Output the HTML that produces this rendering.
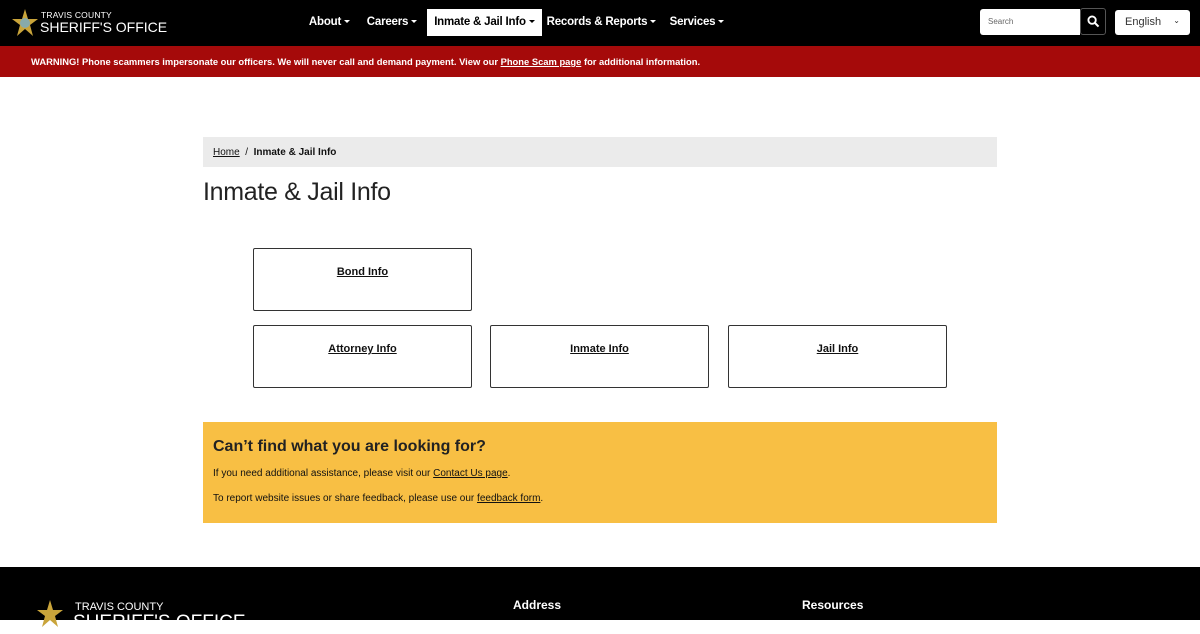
<!DOCTYPE html>
<html><head><meta charset="utf-8"><style>
*{box-sizing:border-box;margin:0;padding:0}
body{width:1200px;height:620px;overflow:hidden;font-family:"Liberation Sans",sans-serif;background:#fff;color:#111}
.top{position:absolute;top:0;left:0;width:1200px;height:46px;background:#000}
.logo{position:absolute;left:10px;top:8px}
.lt1{position:absolute;left:41px;top:10px;color:#fff;font-size:8.5px;letter-spacing:.2px}
.lt2{position:absolute;left:40px;top:19px;color:#fff;font-size:14px}
.nav{position:absolute;top:9px;height:27px;color:#fff;font-size:11.5px;font-weight:bold;line-height:27px;text-align:center;letter-spacing:-.2px;white-space:nowrap}
.nav.act{background:#fff;color:#000}
.car{display:inline-block;border-left:3px solid transparent;border-right:3px solid transparent;border-top:3px solid currentColor;vertical-align:middle;margin-left:3px}
.search{position:absolute;left:980px;top:9px;width:100px;height:26px;background:#fff;border-radius:3px 0 0 3px;font-size:8px;color:#666;padding:8px}
.sbtn{position:absolute;left:1080px;top:8px;width:26px;height:27px;border:1px solid #555;border-radius:3px}
.lang{position:absolute;left:1115px;top:10px;width:75px;height:25px;background:#fff;border-radius:3px;font-size:11px;color:#333;padding:6px 10px}
.warn{position:absolute;top:46px;left:0;width:1200px;height:31px;background:#a50a0a;color:#fff;font-size:9.4px;font-weight:bold;padding-left:31px;line-height:30px;padding-top:1px}
.warn u{color:#fff}
.bc{position:absolute;left:203px;top:137px;width:794px;height:30px;background:#ebebeb;font-size:10px;padding-left:10px;line-height:31px}
h1{position:absolute;left:203px;top:178px;font-size:25px;font-weight:normal;color:#222;letter-spacing:-.3px}
.card{position:absolute;width:219px;height:63px;border:1px solid #333;border-radius:2px;text-align:center;font-size:11px;font-weight:bold;padding-top:17px;text-decoration:underline}
.help{position:absolute;left:203px;top:422px;width:794px;height:101px;background:#f8bf44;padding:16px 10px}
.help h2{font-size:16px;font-weight:bold;color:#222;margin-bottom:12px}
.help p{font-size:10px;margin-bottom:14px}
.foot{position:absolute;top:567px;left:0;width:1200px;height:53px;background:#000;color:#fff}
</style></head><body>
<div class="top">
<svg class="logo" width="30" height="30" viewBox="0 0 30 30"><polygon points="15,1 18,11 28,11 20,17 23,28 15,21 7,28 10,17 2,11 12,11" fill="#c9a43a"/><circle cx="15" cy="15" r="5" fill="#8aa"/></svg>
<div class="lt1">TRAVIS COUNTY</div><div class="lt2">SHERIFF'S OFFICE</div>
<div class="nav" style="left:302px;width:55px">About<span class="car"></span></div>
<div class="nav" style="left:362px;width:60px">Careers<span class="car"></span></div>
<div class="nav act" style="left:427px;width:115px">Inmate &amp; Jail Info<span class="car"></span></div>
<div class="nav" style="left:544px;width:115px">Records &amp; Reports<span class="car"></span></div>
<div class="nav" style="left:664px;width:66px">Services<span class="car"></span></div>
<div class="search">Search</div>
<svg class="sbtn" viewBox="0 0 26 27"><circle cx="12" cy="12" r="4" stroke="#fff" stroke-width="2" fill="none"/><line x1="15" y1="15" x2="19" y2="19" stroke="#fff" stroke-width="2.2"/></svg>
<div class="lang">English <span style="float:right;font-size:8px">&#8964;</span></div>
</div>
<div class="warn">WARNING! Phone scammers impersonate our officers. We will never call and demand payment. View our <u>Phone Scam page</u> for additional information.</div>
<div class="bc"><u>Home</u> &nbsp;/&nbsp; <b>Inmate &amp; Jail Info</b></div>
<h1>Inmate &amp; Jail Info</h1>
<div class="card" style="left:253px;top:248px">Bond Info</div>
<div class="card" style="left:253px;top:325px">Attorney Info</div>
<div class="card" style="left:490px;top:325px">Inmate Info</div>
<div class="card" style="left:728px;top:325px">Jail Info</div>
<div class="help"><h2>Can’t find what you are looking for?</h2>
<p>If you need additional assistance, please visit our <u>Contact Us page</u>.</p>
<p>To report website issues or share feedback, please use our <u>feedback form</u>.</p></div>
<div class="foot">
<svg style="position:absolute;left:30px;top:32px" width="40" height="30" viewBox="0 0 30 30"><polygon points="15,1 18,11 28,11 20,17 23,28 15,21 7,28 10,17 2,11 12,11" fill="#c9a43a"/></svg>
<div style="position:absolute;left:75px;top:34px;font-size:11px">TRAVIS COUNTY</div>
<div style="position:absolute;left:73px;top:45px;font-size:19px">SHERIFF'S OFFICE</div>
<div style="position:absolute;left:513px;top:31px;font-size:12px;font-weight:bold">Address</div>
<div style="position:absolute;left:802px;top:31px;font-size:12px;font-weight:bold">Resources</div>
</div>
</body></html>
